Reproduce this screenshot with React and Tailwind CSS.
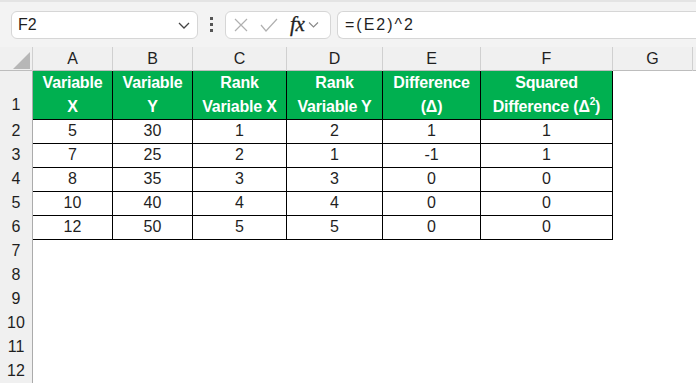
import React from 'react';

const cols = ['A', 'B', 'C', 'D', 'E', 'F', 'G'];

const headers = [
  ['Variable', 'X'],
  ['Variable', 'Y'],
  ['Rank', 'Variable X'],
  ['Rank', 'Variable Y'],
  ['Difference', '(Δ)'],
  ['Squared', null],
];

const rows = [
  [5, 30, 1, 2, 1, 1],
  [7, 25, 2, 1, -1, 1],
  [8, 35, 3, 3, 0, 0],
  [10, 40, 4, 4, 0, 0],
  [12, 50, 5, 5, 0, 0],
];

const gridCols = 'grid grid-cols-[33px_80px_80px_94px_96px_98px_132px_80px_1fr]';

const App = () => {
  return (
    <div className="w-[696px] h-[383px] overflow-hidden bg-white text-[#1f1f1f] font-['Liberation_Sans',Arial,sans-serif]">
      {/* Formula bar */}
      <div className="h-[47px] bg-[#f3f3f3] border-t-2 border-[#e4e4e4] flex items-center pl-[11px]">
        <div className="w-[187px] h-[28px] bg-white border border-[#d6d6d6] rounded-md flex items-center justify-between pl-[6px] pr-[6px] text-[16px]">
          <span>F2</span>
          <svg width="14" height="14" viewBox="0 0 14 14" fill="none" stroke="#444" strokeWidth="1.3">
            <path d="M2 5l5 5 5-5" />
          </svg>
        </div>
        <div className="w-[27px] flex flex-col items-center gap-[3px]">
          <span className="w-[3px] h-[3px] bg-[#555]" />
          <span className="w-[3px] h-[3px] bg-[#555]" />
          <span className="w-[3px] h-[3px] bg-[#555]" />
        </div>
        <div className="w-[106px] h-[28px] bg-white border border-[#d6d6d6] rounded-md flex items-center pl-[8px]">
          <svg width="14" height="14" viewBox="0 0 14 14" fill="none" stroke="#b0b0b0" strokeWidth="1.2">
            <path d="M1 1l12 12M13 1L1 13" />
          </svg>
          <svg className="ml-[12px]" width="18" height="14" viewBox="0 0 18 14" fill="none" stroke="#b0b0b0" strokeWidth="1.2">
            <path d="M1 7l5 6L17 1" />
          </svg>
          <span className="ml-[12px] font-['Liberation_Serif',serif] italic text-[21px] text-[#222] leading-none tracking-[-0.3px] [-webkit-text-stroke:0.3px_#222]">fx</span>
          <svg className="ml-[3px]" width="11" height="11" viewBox="0 0 11 11" fill="none" stroke="#888" strokeWidth="1.1">
            <path d="M1 3.5l4.5 4.5L10 3.5" />
          </svg>
        </div>
        <div className="ml-[6px] flex-1 h-[28px] bg-white border border-r-0 border-[#d6d6d6] rounded-l-md flex items-center pl-[7px] text-[16px] tracking-[2px]">
          =(E2)^2
        </div>
      </div>

      {/* Column headers */}
      <div className={`${gridCols} h-[24px] bg-[#f0f0f0] border-b border-[#bdbdbd] text-[16px]`}>
        <div className="relative border-r border-[#d0d0d0]">
          <svg className="absolute right-[2px] bottom-[2px]" width="17" height="17" viewBox="0 0 17 17">
            <path d="M17 0V17H0Z" fill="#b7b7b7" />
          </svg>
        </div>
        {cols.map((c) => (
          <div key={c} className="flex items-center justify-center border-r border-[#d0d0d0]">
            {c}
          </div>
        ))}
        <div />
      </div>

      {/* Row 1 */}
      <div className={`${gridCols} h-[48px]`}>
        <div className="bg-[#f0f0f0] border-r border-[#ababab] border-b border-b-[#d0d0d0] flex items-end justify-center pb-[2px] text-[16px]">1</div>
        {headers.map((h, i) => (
          <div
            key={i}
            className="bg-[#00b050] text-white font-bold text-[16px] tracking-[-0.2px] leading-[24px] border-r border-b border-black flex flex-col items-center justify-center"
          >
            <span>{h[0]}</span>
            {h[1] ? (
              <span>{h[1]}</span>
            ) : (
              <span>
                Difference (Δ<sup className="text-[10px] relative -top-[7px]">2</sup>)
              </span>
            )}
          </div>
        ))}
        <div />
        <div />
      </div>

      {/* Data rows */}
      {rows.map((r, ri) => (
        <div key={ri} className={`${gridCols} h-[24px] text-[16px]`}>
          <div className="bg-[#f0f0f0] border-r border-[#ababab] border-b border-b-[#d0d0d0] flex items-center justify-center">
            {ri + 2}
          </div>
          {r.map((v, vi) => (
            <div key={vi} className="border-r border-b border-black flex items-center justify-center">
              {v}
            </div>
          ))}
          <div />
          <div />
        </div>
      ))}

      {/* Empty rows */}
      {[7, 8, 9, 10, 11, 12].map((n) => (
        <div key={n} className={`${gridCols} h-[24px] text-[16px]`}>
          <div className="bg-[#f0f0f0] border-r border-[#ababab] border-b border-b-[#d0d0d0] flex items-center justify-center">
            {n}
          </div>
        </div>
      ))}
    </div>
  );
};

export default App;
